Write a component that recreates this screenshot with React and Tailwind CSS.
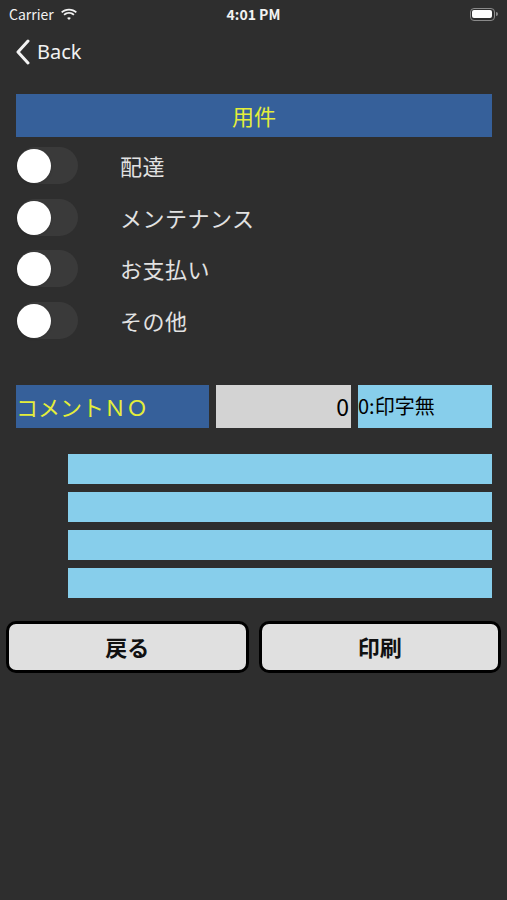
import React from 'react'

const font = { fontFamily: '"Noto Sans CJK JP", "Noto Sans", sans-serif' }

function Toggle() {
  return (
    <div className="w-[61px] h-[37px] rounded-full bg-[#3a3a3a] relative shrink-0">
      <div className="absolute left-0 top-[2px] w-[34px] h-[34px] rounded-full bg-white shadow" />
    </div>
  )
}

export default function App() {
  const items = ['配達', 'メンテナンス', 'お支払い', 'その他']
  return (
    <div className="w-[507px] h-[900px] bg-[#2e2e2e] text-white overflow-hidden" style={font}>
      {/* status bar */}
      <div className="h-[28px] flex items-center justify-between px-[9px] text-[14px] font-semibold text-[#f2f2f2]">
        <div className="flex items-center gap-[6px] w-[120px]">
          <span className="font-normal">Carrier</span>
          <svg width="18" height="13" viewBox="0 0 17 12" fill="#f2f2f2">
            <path d="M8.5 2.2c2.4 0 4.6.9 6.3 2.5l1.2-1.2C14 1.6 11.4.5 8.5.5S3 1.6 1 3.5l1.2 1.2C3.9 3.1 6.1 2.2 8.5 2.2z" />
            <path d="M8.5 5.4c1.5 0 2.9.6 4 1.6l1.2-1.2C12.3 4.5 10.5 3.7 8.5 3.7S4.7 4.5 3.3 5.8l1.2 1.2c1.1-1 2.5-1.6 4-1.6z" />
            <path d="M8.5 8.6c.7 0 1.3.3 1.8.7l-1.8 1.9-1.8-1.9c.5-.4 1.1-.7 1.8-.7z" />
          </svg>
        </div>
        <span>4:01 PM</span>
        <div className="w-[120px] flex justify-end">
          <div className="flex items-center">
            <div className="w-[25px] h-[13px] rounded-[4px] border border-[#8a8a8a] p-[1.5px]">
              <div className="w-full h-full rounded-[2px] bg-white" />
            </div>
            <div className="w-[2px] h-[4px] bg-[#8a8a8a] rounded-r-sm ml-[1px]" />
          </div>
        </div>
      </div>

      {/* nav */}
      <div className="h-[48px] flex items-center pl-[15px] gap-[6px]">
        <svg width="16" height="26" viewBox="0 0 16 26" fill="none" stroke="#f2f2f2" strokeWidth="3" strokeLinecap="round" strokeLinejoin="round">
          <path d="M13 2 L3 13 L13 24" />
        </svg>
        <span className="text-[20px] text-[#f2f2f2]" style={{ fontFamily: '"Noto Sans", sans-serif' }}>Back</span>
      </div>

      <div className="px-[16px] pt-[18px] pr-[15px]">
        <div className="h-[43px] bg-[#36609a] flex items-center justify-center text-[22px] text-[#e4ee3a]">
          用件
        </div>

        <div className="flex flex-col gap-[14.5px] mt-[10px] pl-[1px]">
          {items.map((t) => (
            <div key={t} className="flex items-center h-[37px]">
              <Toggle />
              <span className="ml-[42px] text-[22px] tracking-[0.5px] text-[#e2e2e2]">{t}</span>
            </div>
          ))}
        </div>

        <div className="flex gap-[7px] mt-[46px] h-[43px]">
          <div className="w-[193px] bg-[#36609a] flex items-center text-[22px] text-[#e4ee3a]">
            コメントＮＯ
          </div>
          <div className="w-[135px] bg-[#d3d3d3] flex items-center justify-end pr-[2px] text-[23px] text-black">
            0
          </div>
          <div className="flex-1 bg-[#87ceeb] flex items-center text-[20px] text-black">
            0:印字無
          </div>
        </div>

        <div className="flex flex-col gap-[8px] mt-[26px] ml-[52px]">
          {[0, 1, 2, 3].map((i) => (
            <div key={i} className="h-[30px] bg-[#87ceeb]" />
          ))}
        </div>
      </div>

      <div className="flex gap-[10px] px-[6px] mt-[23px]">
        <button className="flex-1 h-[52px] bg-[#e0e0e0] border-[3px] border-black rounded-[10px] text-[22px] font-bold text-[#111]">
          戻る
        </button>
        <button className="flex-1 h-[52px] bg-[#e0e0e0] border-[3px] border-black rounded-[10px] text-[22px] font-bold text-[#111]">
          印刷
        </button>
      </div>
    </div>
  )
}
